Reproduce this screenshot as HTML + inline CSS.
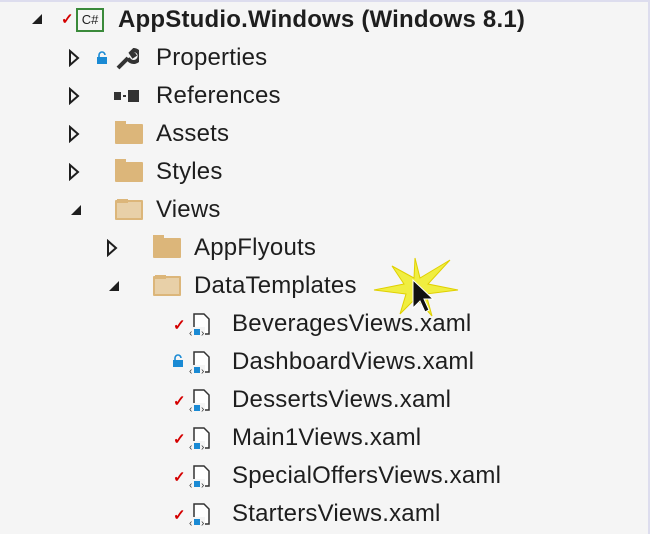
<html><head><style>
body{margin:0;width:650px;height:534px;background:#f5f5f5;overflow:hidden;position:relative;font-family:"Liberation Sans",sans-serif;color:#1e1e1e}
.r{position:absolute;height:38px;line-height:38px;font-size:24px;letter-spacing:0.2px;white-space:nowrap}
.a{position:absolute}
.fold{position:absolute;width:28px;height:20px;background:#dcb67a;border-radius:1px}
.fold:before{content:"";position:absolute;left:0;top:-3px;width:11px;height:4px;background:#dcb67a}
.ck{position:absolute;color:#d40000;font-size:15px;font-weight:bold}
</style></head><body>
<div style="position:absolute;left:0;top:0;width:650px;height:2px;background:#dde"></div>
<div style="position:absolute;right:0;top:0;width:2px;height:534px;background:#dde"></div>
<svg class="a" style="left:30px;top:12px" width="14" height="14"><polygon points="12,2 12,12 2,12" fill="#1e1e1e"/></svg>
<div class="ck" style="left:61px;top:10px">✓</div>
<div class="a" style="left:76px;top:8px;border:2px solid #3a8a3a;font-size:13px;line-height:20px;text-align:center;background:#f5f5f5;box-sizing:border-box;width:28px;height:24px">C#</div>
<div class="r" style="left:118px;top:1px;font-weight:bold">AppStudio.Windows (Windows 8.1)</div>
<svg class="a" style="left:68px;top:49px" width="12" height="18"><polygon points="2,2 10,9 2,16" fill="none" stroke="#1e1e1e" stroke-width="2"/></svg>
<svg class="a" style="left:68px;top:87px" width="12" height="18"><polygon points="2,2 10,9 2,16" fill="none" stroke="#1e1e1e" stroke-width="2"/></svg>
<svg class="a" style="left:68px;top:125px" width="12" height="18"><polygon points="2,2 10,9 2,16" fill="none" stroke="#1e1e1e" stroke-width="2"/></svg>
<svg class="a" style="left:68px;top:163px" width="12" height="18"><polygon points="2,2 10,9 2,16" fill="none" stroke="#1e1e1e" stroke-width="2"/></svg>
<svg class="a" style="left:69px;top:203px" width="14" height="14"><polygon points="12,2 12,12 2,12" fill="#1e1e1e"/></svg>
<svg class="a" style="left:106px;top:239px" width="12" height="18"><polygon points="2,2 10,9 2,16" fill="none" stroke="#1e1e1e" stroke-width="2"/></svg>
<svg class="a" style="left:107px;top:279px" width="14" height="14"><polygon points="12,2 12,12 2,12" fill="#1e1e1e"/></svg>
<svg class="a" style="left:96px;top:51px" width="12" height="14"><path d="M3,6 V4 a3,3 0 0 1 6,0" fill="none" stroke="#1a8ad4" stroke-width="1.6"/><rect x="1" y="6" width="10" height="7" fill="#1a8ad4"/></svg>
<svg class="a" style="left:115px;top:47px" width="24" height="24"><path d="M3,21 L13,11 M13,11 a6,6 0 1 0 6,-8 l-3,3 l2,3 l3,-2" stroke="#333" stroke-width="4" fill="none"/></svg>
<div class="r" style="left:156px;top:39px">Properties</div>
<div class="a" style="left:114px;top:92px;width:7px;height:8px;background:#333"></div>
<div class="a" style="left:123px;top:95px;width:3px;height:2px;background:#333"></div>
<div class="a" style="left:128px;top:90px;width:11px;height:12px;background:#333"></div>
<div class="r" style="left:156px;top:77px">References</div>
<div class="fold" style="left:115px;top:124px"></div><div class="r" style="left:156px;top:115px">Assets</div>
<div class="fold" style="left:115px;top:162px"></div><div class="r" style="left:156px;top:153px">Styles</div>
<div class="fold" style="left:115px;top:200px;background:#e8d0a8;border:2px solid #dcb67a;box-sizing:border-box"></div><div class="r" style="left:156px;top:191px">Views</div>
<div class="fold" style="left:153px;top:238px"></div><div class="r" style="left:194px;top:229px">AppFlyouts</div>
<div class="fold" style="left:153px;top:276px;background:#e8d0a8;border:2px solid #dcb67a;box-sizing:border-box"></div><div class="r" style="left:194px;top:267px">DataTemplates</div>
<svg class="a" style="left:370px;top:250px" width="90" height="75"><polygon points="45,8 50,28 80,10 58,34 88,40 56,44 62,66 46,48 30,64 36,44 4,40 34,34 22,16 44,28" fill="#f0ee40" stroke="#e0d000"/><path d="M43,30 L43,58 L50,51 L55,62 L59,60 L54,49 L63,49 Z" fill="#111" stroke="#fff" stroke-width="1"/></svg>
<div id="files"></div>
<script>
var f=[["BeveragesViews.xaml",1],["DashboardViews.xaml",0],["DessertsViews.xaml",1],["Main1Views.xaml",1],["SpecialOffersViews.xaml",1],["StartersViews.xaml",1]];
var h="";f.forEach(function(x,i){var t=305+38*i;
h+=x[1]?'<div class="ck" style="left:173px;top:'+(t+11)+'px">✓</div>':'<svg class="a" style="left:172px;top:'+(t+11)+'px" width="12" height="14"><path d="M3,6 V4 a3,3 0 0 1 6,0" fill="none" stroke="#1a8ad4" stroke-width="1.6"/><rect x="1" y="6" width="10" height="7" fill="#1a8ad4"/></svg>';
h+='<svg class="a" style="left:188px;top:'+(t+7)+'px" width="26" height="28"><path d="M6,2 H16 L21,7 V22 H6 Z" fill="#fff" stroke="#333" stroke-width="1.5"/><rect x="1" y="15" width="16" height="10" fill="#f5f5f5"/><text x="1" y="24" font-size="10" fill="#333">‹</text><rect x="6" y="17" width="6" height="6" fill="#1a8ad4"/><text x="13" y="24" font-size="10" fill="#333">›</text></svg>';
h+='<div class="r" style="left:232px;top:'+t+'px">'+x[0]+'</div>';});
document.getElementById("files").innerHTML=h;
</script>
</body></html>
